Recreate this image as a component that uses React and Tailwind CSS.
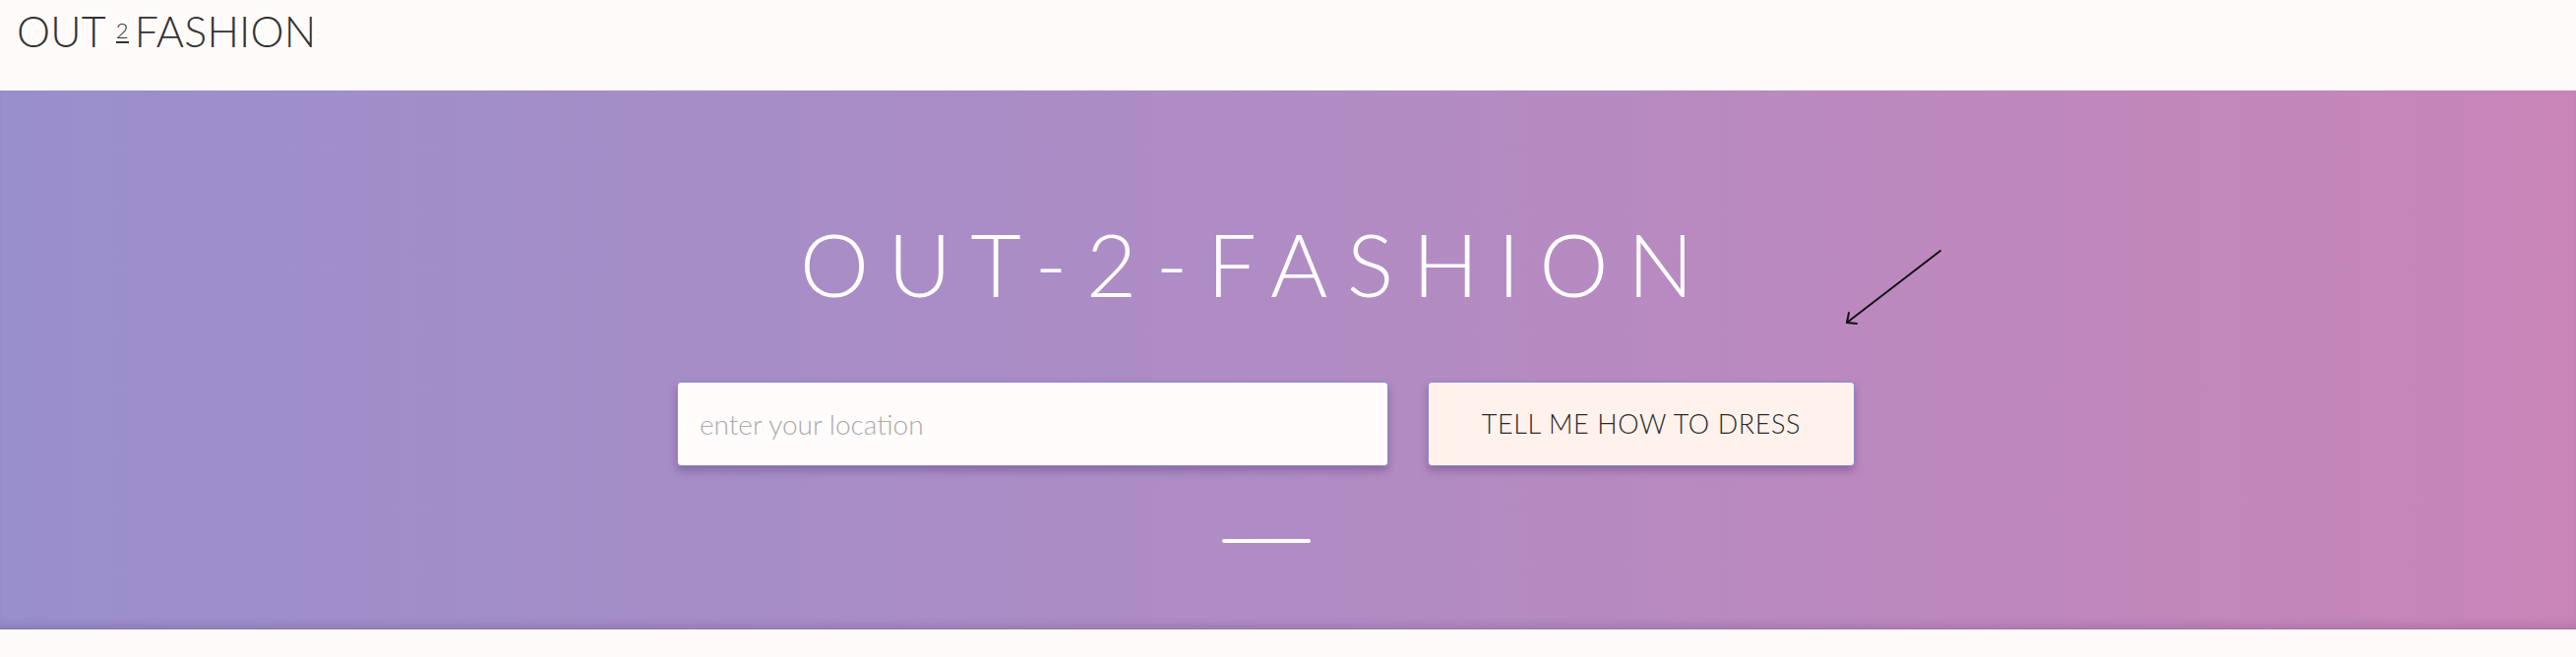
import React, { useState } from "react";

// Landing hero for Out-2-Fashion
export default function App() {
	const [location, setLocation] = useState("");

	return (
		<div className="min-h-screen bg-[#fffbfa] font-['Lato','Liberation_Sans',sans-serif]">
			<header className="h-[92px] px-[17px] flex items-start">
				<div className="mt-[6px] flex items-baseline text-[43px] font-light text-[#333] leading-none tracking-[0.2px] h-[50px] pt-[4px]">
					<span>OUT</span>
					<span className="ml-[10px] mr-[6px] inline-block text-[22px] leading-[14px] relative -top-[9px] border-b-2 border-[#333] pb-[4px] font-light">2</span>
					<span>FASHION</span>
				</div>
			</header>

			<section className="relative h-[548px] bg-gradient-to-r from-[#998fcc] via-[#b08cc4] to-[#c985b8] shadow-[inset_0_-10px_10px_-6px_rgba(60,30,80,0.18)]">
				<div className="flex flex-col items-center pt-[131px] pr-[45px]">
					<h1 className="text-[89px] leading-none font-light text-white tracking-[19.2px] ml-[-20px]">
						OUT-2-FASHION
					</h1>

					<form
						className="mt-[76px] flex gap-[40px]"
						onSubmit={(e) => e.preventDefault()}
					>
						<input
							value={location}
							onChange={(e) => setLocation(e.target.value)}
							placeholder="enter your location"
							className="w-[723px] h-[86px] px-[22px] rounded-[4px] bg-[#fffcfb] border border-[#8e88d0] shadow-[0_5px_8px_rgba(70,40,100,0.35)] text-[28px] font-light text-[#555] placeholder:text-[#ababab] outline-none"
						/>
						<button
							type="submit"
							className="w-[434px] h-[86px] rounded-[4px] bg-[#fff2ed] border border-[#8e88d0] shadow-[0_5px_8px_rgba(70,40,100,0.35)] text-[27px] font-light text-[#2a2a2a] tracking-[0.6px]"
						>
							TELL ME HOW TO DRESS
						</button>
					</form>

					<div className="mt-[74px] w-[90px] h-[4px] rounded-full bg-white" />
				</div>

				<svg
					className="absolute left-[1870px] top-[160px]"
					width="110"
					height="85"
					viewBox="0 0 110 85"
					fill="none"
					stroke="#111"
					strokeWidth="2"
					strokeLinecap="round"
				>
					<line x1="102" y1="3" x2="7" y2="76" />
					<line x1="7" y1="76" x2="9" y2="66" />
					<line x1="7" y1="76" x2="17" y2="77" />
				</svg>
			</section>
		</div>
	);
}
